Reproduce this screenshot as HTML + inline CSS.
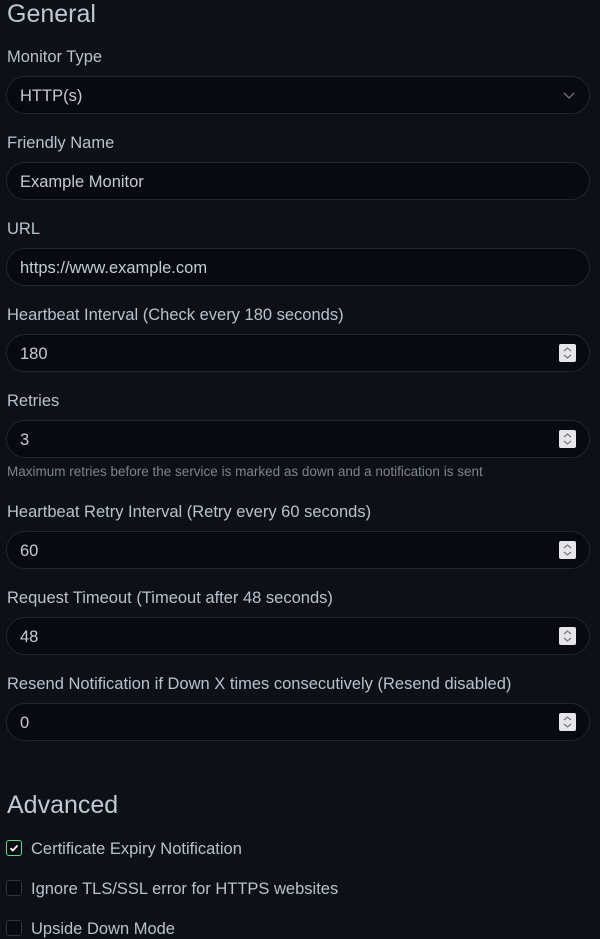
<!DOCTYPE html>
<html><head><style>
body{margin:0;background:#0d1117;color:#b8c2cc;font-family:"Liberation Sans",sans-serif;width:600px;height:924px;overflow:hidden;position:relative}
h2{position:absolute;left:7px;margin:0;font-weight:400;font-size:25px;color:#bfc9d3}
.l{position:absolute;left:7px;font-size:16.5px;line-height:20px}
.i{position:absolute;left:6px;width:582px;height:36px;border:1px solid #1d2736;border-radius:19px;background:#070a10;box-sizing:content-box}
.i span{position:absolute;left:13px;top:9px;font-size:16.5px;line-height:20px;color:#c3ccd5}
.sp{position:absolute;right:13px;top:9px;width:17px;height:18px;background:#e6e6ea;border-radius:2px}
.sp svg{position:absolute;left:3px;top:2px}
.h{position:absolute;left:7px;font-size:13.5px;color:#7a848f}
.cb{position:absolute;left:6px;width:14px;height:14px;border:1px solid #2a3442;border-radius:3px;background:#070a10}
.ct{position:absolute;left:31px;font-size:16.5px;line-height:20px}
</style></head><body>
<h2 style="top:0px">General</h2>
<div class="l" style="top:47px">Monitor Type</div>
<div class="i" style="top:76px"><span>HTTP(s)</span><svg style="position:absolute;right:14px;top:13px" width="12" height="10" viewBox="0 0 12 10"><path d="M1 3l5 5 5-5" stroke="#6b7580" stroke-width="1.3" fill="none"/></svg></div>
<div class="l" style="top:133px">Friendly Name</div>
<div class="i" style="top:162px"><span>Example Monitor</span></div>
<div class="l" style="top:219px">URL</div>
<div class="i" style="top:248px"><span>https://www.example.com</span></div>
<div class="l" style="top:305px">Heartbeat Interval (Check every 180 seconds)</div>
<div class="i" style="top:334px"><span>180</span><div class="sp"><svg width="11" height="14" viewBox="0 0 11 14"><path d="M2 5l3.5-3 3.5 3M2 9l3.5 3 3.5-3" stroke="#777" stroke-width="1.2" fill="none"/></svg></div></div>
<div class="l" style="top:391px">Retries</div>
<div class="i" style="top:420px"><span>3</span><div class="sp"><svg width="11" height="14" viewBox="0 0 11 14"><path d="M2 5l3.5-3 3.5 3M2 9l3.5 3 3.5-3" stroke="#777" stroke-width="1.2" fill="none"/></svg></div></div>
<div class="h" style="top:464px">Maximum retries before the service is marked as down and a notification is sent</div>
<div class="l" style="top:502px">Heartbeat Retry Interval (Retry every 60 seconds)</div>
<div class="i" style="top:531px"><span>60</span><div class="sp"><svg width="11" height="14" viewBox="0 0 11 14"><path d="M2 5l3.5-3 3.5 3M2 9l3.5 3 3.5-3" stroke="#777" stroke-width="1.2" fill="none"/></svg></div></div>
<div class="l" style="top:588px">Request Timeout (Timeout after 48 seconds)</div>
<div class="i" style="top:617px"><span>48</span><div class="sp"><svg width="11" height="14" viewBox="0 0 11 14"><path d="M2 5l3.5-3 3.5 3M2 9l3.5 3 3.5-3" stroke="#777" stroke-width="1.2" fill="none"/></svg></div></div>
<div class="l" style="top:674px">Resend Notification if Down X times consecutively (Resend disabled)</div>
<div class="i" style="top:703px"><span>0</span><div class="sp"><svg width="11" height="14" viewBox="0 0 11 14"><path d="M2 5l3.5-3 3.5 3M2 9l3.5 3 3.5-3" stroke="#777" stroke-width="1.2" fill="none"/></svg></div></div>
<h2 style="top:791px">Advanced</h2>
<div class="cb" style="top:840px;border-color:#5cdd8b"><svg style="position:absolute;left:1px;top:1px" width="12" height="12" viewBox="0 0 12 12"><path d="M2.5 6.2l2.3 2.3 4.7-5" stroke="#fff" stroke-width="1.8" fill="none"/></svg></div>
<div class="ct" style="top:839px">Certificate Expiry Notification</div>
<div class="cb" style="top:880px"></div>
<div class="ct" style="top:879px">Ignore TLS/SSL error for HTTPS websites</div>
<div class="cb" style="top:920px"></div>
<div class="ct" style="top:919px">Upside Down Mode</div>
</body></html>
